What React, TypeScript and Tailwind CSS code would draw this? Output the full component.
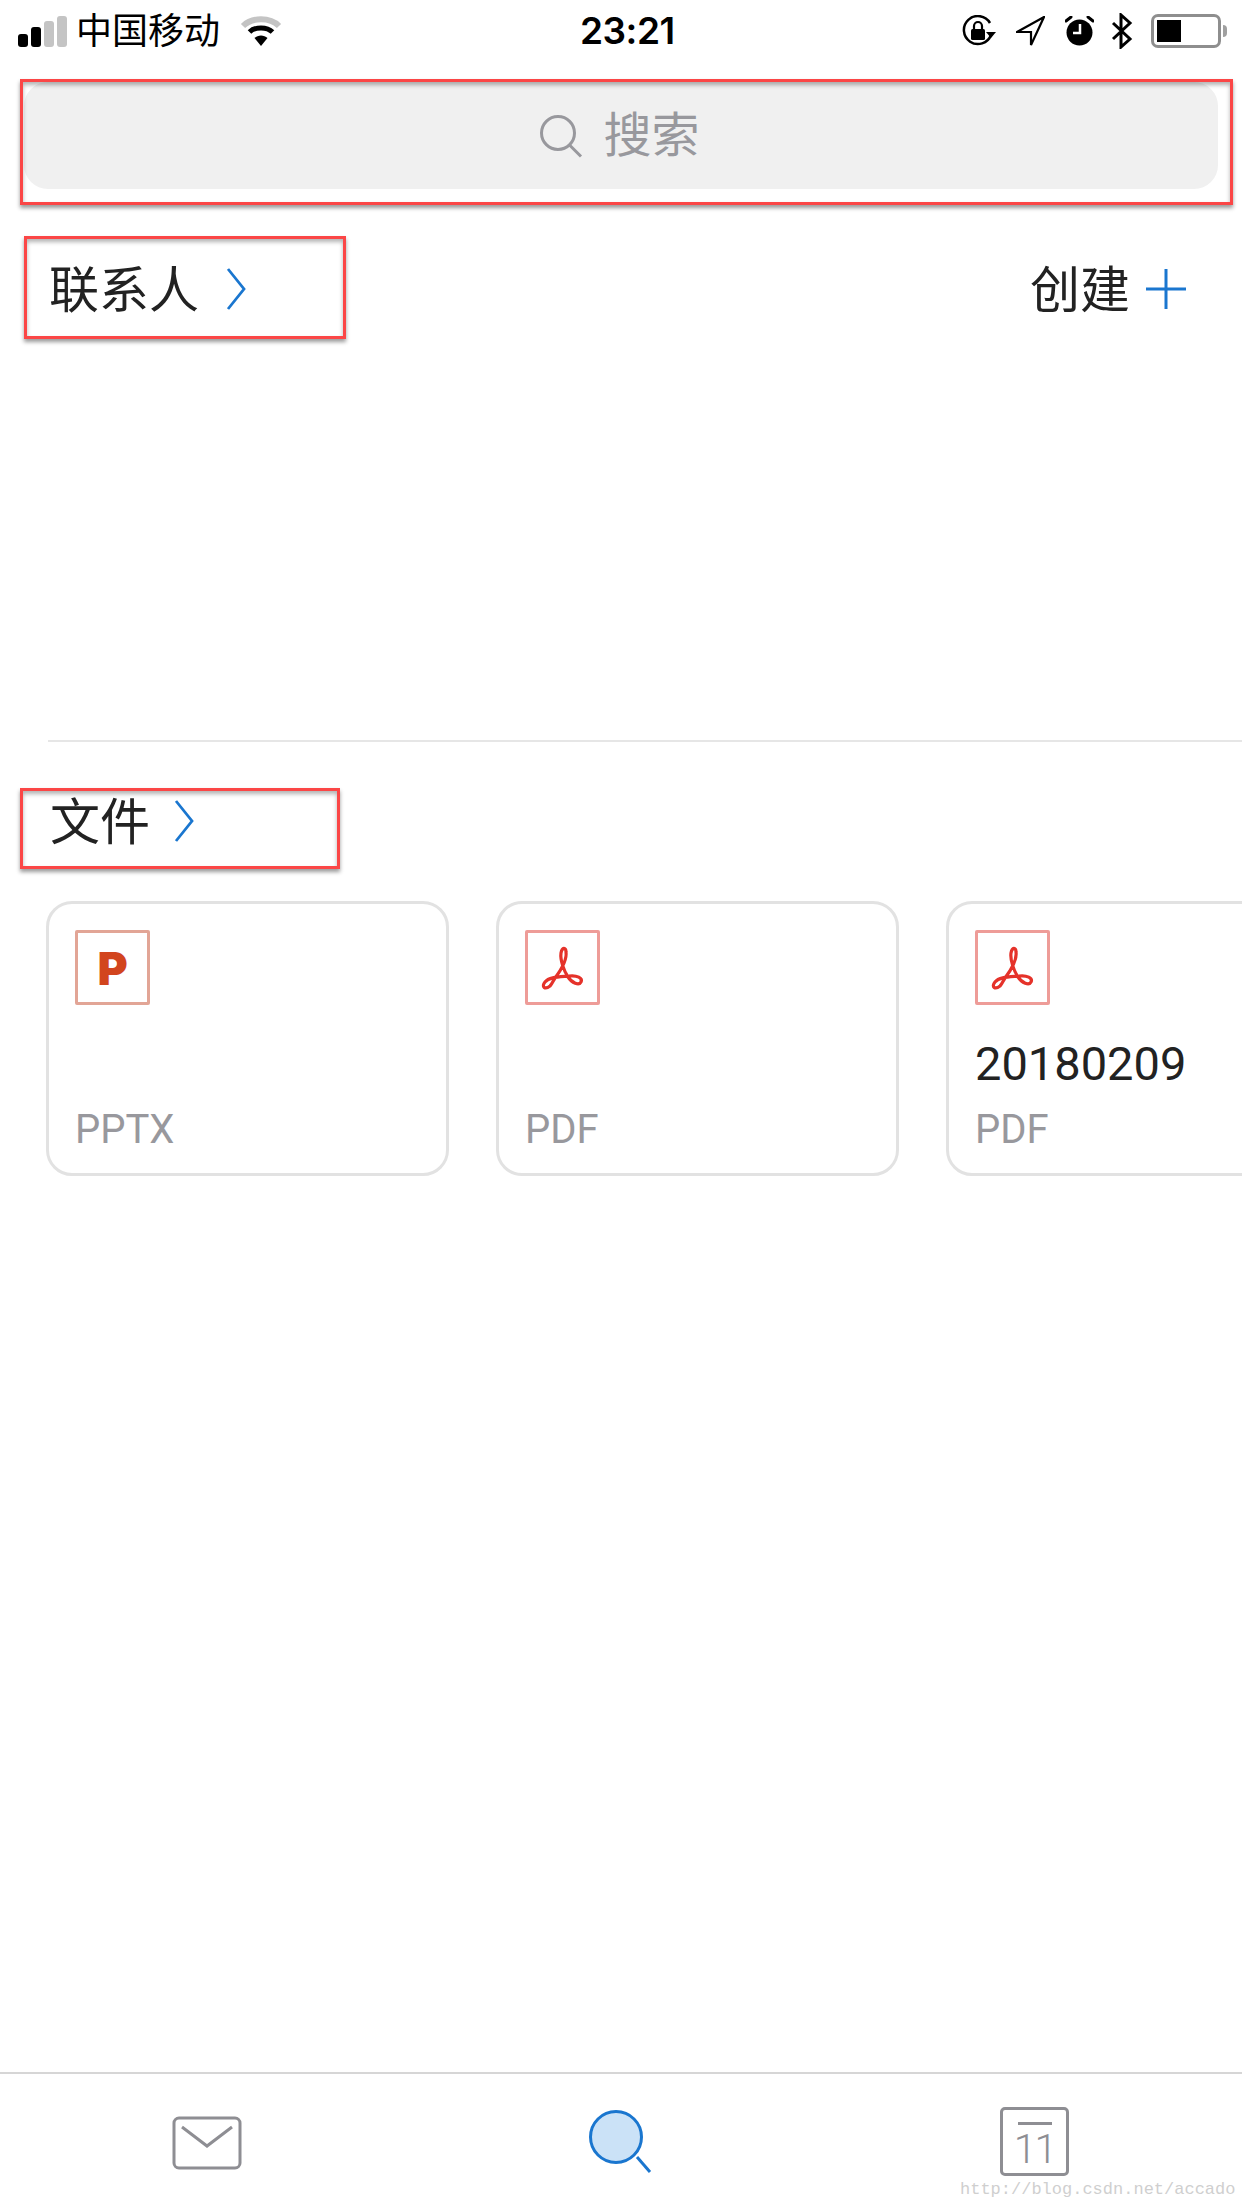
function SignalBars() {
  return (
    <div className="flex items-end gap-[3px] h-[31px] w-[49px]">
      <div className="w-[10px] h-[13px] rounded-[3px] bg-black" />
      <div className="w-[10px] h-[20px] rounded-[3px] bg-black" />
      <div className="w-[10px] h-[26px] rounded-[3px] bg-[#c4c4c4]" />
      <div className="w-[10px] h-[31px] rounded-[3px] bg-[#c4c4c4]" />
    </div>
  );
}

function WifiIcon() {
  return (
    <svg width="42" height="30" viewBox="0 0 42 30" className="ml-[20px]">
      <path d="M3 10 C12 1 30 1 39 10" fill="none" stroke="#c4c4c4" strokeWidth="6" />
      <path d="M9.5 16 C15 10.500 27 10.500 32.500 16" fill="none" stroke="#000" strokeWidth="5" />
      <path d="M14.500 22 L21 30 L27.500 22 C24 18.500 18 18.500 14.500 22 Z" fill="#000" />
    </svg>
  );
}

function RotationLockIcon() {
  return (
    <svg width="35" height="32" viewBox="0 0 35 32">
      <path d="M29 20 A14 14 0 1 1 28 8" fill="none" stroke="#000" strokeWidth="2.500" />
      <path d="M24 17 L34 17 L29 23 Z" fill="#000" />
      <rect x="9" y="14" width="14" height="11" rx="1.500" fill="#000" />
      <path d="M12 14 V11 A4 4 0 0 1 20 11 V14" fill="none" stroke="#000" strokeWidth="2.200" />
    </svg>
  );
}

function LocationIcon() {
  return (
    <svg width="29" height="30" viewBox="0 0 29 30">
      <path d="M28 1 L1 16 L15 16 L15 29 Z" fill="none" stroke="#000" strokeWidth="2.200" strokeLinejoin="miter" />
    </svg>
  );
}

function AlarmIcon() {
  return (
    <svg width="29" height="30" viewBox="0 0 29 30">
      <circle cx="14.500" cy="16.500" r="13" fill="#000" />
      <path d="M1 5 L6 1 M28 5 L23 1" stroke="#000" strokeWidth="3" strokeLinecap="round" />
      <path d="M15 8 V17 H8" fill="none" stroke="#fff" strokeWidth="2.500" />
    </svg>
  );
}

function BluetoothIcon() {
  return (
    <svg width="22" height="36" viewBox="0 0 22 36">
      <path d="M2 10 L19 26 L10 34 V2 L19 10 L2 26" fill="none" stroke="#000" strokeWidth="3" />
    </svg>
  );
}

function Battery() {
  return (
    <div className="flex items-center gap-[2px]">
      <div className="w-[70px] h-[34px] rounded-[7px] border-[3px] border-[#8e8e8e] p-[3px]">
        <div className="w-[24px] h-full bg-black" />
      </div>
      <div className="w-[4px] h-[12px] rounded-r-full bg-[#a0a0a0]" />
    </div>
  );
}

function StatusBar() {
  return (
    <div className="h-[62px] pl-[18px] pr-[15px] relative flex items-center">
      <SignalBars />
      <span className="ml-[9px] mb-[6px] text-[36px] leading-none text-black">中国移动</span>
      <WifiIcon />
      <span className="absolute left-[580px] top-[12px] text-[37px] leading-[38px] font-semibold text-black font-['Inter',sans-serif] tracking-[-0.5px]">
        23:21
      </span>
      <div className="ml-auto flex items-center">
        <RotationLockIcon />
        <div className="ml-[19px]"><LocationIcon /></div>
        <div className="ml-[20px]"><AlarmIcon /></div>
        <div className="ml-[17px]"><BluetoothIcon /></div>
        <div className="ml-[18px]"><Battery /></div>
      </div>
    </div>
  );
}

function SearchBar() {
  return (
    <div className="mt-[20px] mx-[24px] h-[107px] pr-[3px] rounded-[24px] bg-[#f0f0f0] flex items-center justify-center text-[#98989d]">
      <svg width="44" height="44" viewBox="0 0 44 44" className="mr-[20px] mt-[1px]">
        <circle cx="19" cy="19" r="16.500" fill="none" stroke="#98989d" strokeWidth="3" />
        <path d="M30.500 31 L42 42.500" stroke="#98989d" strokeWidth="3" />
      </svg>
      <span className="text-[48px] leading-none mb-[10px]">搜索</span>
    </div>
  );
}

function Chevron() {
  return (
    <svg width="20" height="44" viewBox="0 0 20 44">
      <path d="M2 2 L18 22 L2 42" fill="none" stroke="#1a76cf" strokeWidth="2.800" />
    </svg>
  );
}

function SectionTitle({ title, gapClass }: { title: string; gapClass: string }) {
  return (
    <div className={"flex items-center " + gapClass}>
      <span className="text-[50px] leading-none text-[#222] mb-[6px]">{title}</span>
      <Chevron />
    </div>
  );
}

function PptIcon() {
  return (
    <div className="w-[75px] h-[75px] rounded-[2px] border-[3px] border-[#e2a596] flex items-center justify-center">
      <span className="text-[46px] leading-none font-black text-[#d2451e] font-['Inter',sans-serif]">P</span>
    </div>
  );
}

function PdfIcon() {
  return (
    <div className="w-[75px] h-[75px] rounded-[2px] border-[3px] border-[#ee9c98]">
      <svg width="69" height="69" viewBox="3 3 69 69">
        <path
          d="M25 56 C20 60 16 57 20 52 C24 47 33 47 44 46 C52 45 58 48 56 52 C54 56 47 53 43 47 C39 41 35 30 36 23 C37 17 41 17 41 22 C42 29 36 40 30 48 C28 51 27 54 25 56 Z"
          fill="none"
          stroke="#e5322a"
          strokeWidth="3.200"
        />
      </svg>
    </div>
  );
}

function FileCard({ kind, name }: { kind: string; name?: string }) {
  return (
    <div className="w-[403px] h-[275px] shrink-0 rounded-[26px] border-[3px] border-[#e2e2e2] pt-[26px] pl-[26px] flex flex-col">
      {kind === "PPTX" ? <PptIcon /> : <PdfIcon />}
      {name && (
        <div className="mt-[31px] text-[47px] leading-[56px] text-[#222] font-['Roboto',sans-serif]">{name}</div>
      )}
      <div className="mt-auto mb-[20px] text-[40px] leading-[46px] text-[#98989d] font-['Roboto',sans-serif]">{kind}</div>
    </div>
  );
}

function MailIcon() {
  return (
    <svg width="70" height="54" viewBox="0 0 70 54">
      <rect x="2" y="2" width="66" height="50" rx="5" fill="none" stroke="#8e8e93" strokeWidth="3" />
      <path d="M10 11 L35 30 L60 11" fill="none" stroke="#8e8e93" strokeWidth="3" />
    </svg>
  );
}

function SearchTabIcon() {
  return (
    <svg width="64" height="64" viewBox="0 0 64 64">
      <circle cx="27" cy="27" r="25.500" fill="#cbe2f7" stroke="#1a76cf" strokeWidth="3" />
      <path d="M48 47 L61 62" stroke="#1a76cf" strokeWidth="3" />
    </svg>
  );
}

function CalendarIcon() {
  return (
    <div className="w-[69px] h-[69px] rounded-[5px] border-[3px] border-[#8e8e93] flex flex-col items-center">
      <div className="w-[34px] h-[3px] mt-[12px] bg-[#8e8e93]" />
      <span className="mt-[4px] text-[41px] leading-[40px] text-[#8e8e93] font-['Roboto',sans-serif] font-light tracking-[-2px]">11</span>
    </div>
  );
}

function RedBox({ className }: { className: string }) {
  return (
    <div className={"absolute border-[3px] border-[#fb4646] shadow-[0_3px_4px_rgba(0,0,0,0.4),inset_0_3px_4px_rgba(0,0,0,0.3)] " + className} />
  );
}

export default function App() {
  return (
    <div className="relative w-[1242px] h-[2208px] overflow-hidden bg-white flex flex-col font-['Noto_Sans_CJK_SC',sans-serif]">
      <StatusBar />
      <SearchBar />

      {/* contacts */}
      <div className="mt-[76px] pl-[49px] pr-[56px] flex items-center justify-between h-[48px]">
        <SectionTitle title="联系人" gapClass="gap-[27px]" />
        <div className="flex items-center gap-[16px]">
          <span className="text-[50px] leading-none text-[#222] mb-[6px]">创建</span>
          <svg width="40" height="40" viewBox="0 0 40 40">
            <path d="M0 20 H40 M20 0 V40" stroke="#1a76cf" strokeWidth="3" />
          </svg>
        </div>
      </div>

      <div className="mt-[427px] ml-[48px] h-[2px] bg-[#e6e6e6]" />

      {/* files */}
      <div className="mt-[51px] pl-[50px]">
        <SectionTitle title="文件" gapClass="gap-[24px]" />
      </div>
      <div className="mt-[52px] pl-[46px] flex gap-[47px]">
        <FileCard kind="PPTX" />
        <FileCard kind="PDF" />
        <FileCard kind="PDF" name="20180209" />
      </div>

      {/* tab bar */}
      <div className="mt-auto h-[136px] border-t-2 border-[#d6d6d6] relative flex items-start">
        <div className="absolute left-[172px] top-[42px]"><MailIcon /></div>
        <div className="absolute left-[589px] top-[36px]"><SearchTabIcon /></div>
        <div className="absolute left-[1000px] top-[33px]"><CalendarIcon /></div>
        <span className="absolute left-[960px] top-[106px] text-[17px] leading-[20px] text-[#cfcfcf] font-['Liberation_Mono',monospace]">
          http://blog.csdn.net/accado
        </span>
      </div>

      <RedBox className="left-[20px] top-[79px] w-[1213px] h-[126px]" />
      <RedBox className="left-[24px] top-[236px] w-[322px] h-[103px]" />
      <RedBox className="left-[20px] top-[788px] w-[320px] h-[81px]" />
    </div>
  );
}
